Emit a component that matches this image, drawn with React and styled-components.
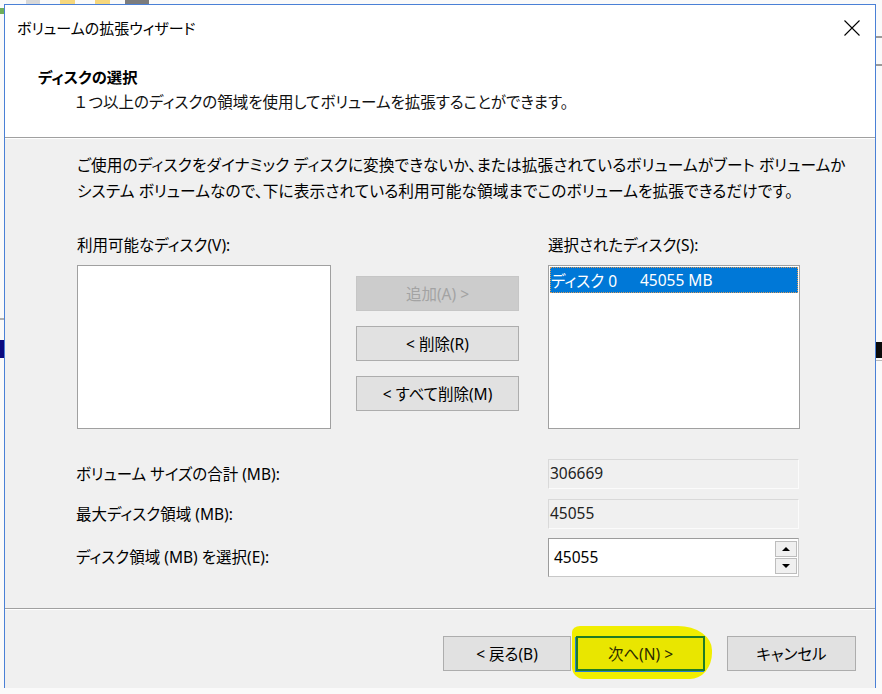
import React from 'react'
import styled, { createGlobalStyle } from 'styled-components'

const GlobalStyle = createGlobalStyle`
  html, body {
    margin: 0;
    padding: 0;
  }
  body {
    background: #fafafa;
    font-family: "Noto Sans", "Noto Sans CJK JP", sans-serif;
    font-feature-settings: "palt";
    color: #000;
  }
  * {
    box-sizing: border-box;
  }
`

const Desktop = styled.div`
  position: relative;
  width: 882px;
  height: 694px;
  overflow: hidden;
  background: #fafafa;
`

// scraps of the Disk Management window lying behind the wizard
const Scrap = styled.div`
  position: absolute;
  left: ${(p) => p.$x}px;
  top: ${(p) => p.$y}px;
  width: ${(p) => p.$w}px;
  height: ${(p) => p.$h}px;
  background: ${(p) => p.$color};
`

const Dialog = styled.div`
  position: absolute;
  left: 4px;
  top: 4px;
  width: 872px;
  height: 684px;
  border: 1px solid #4a80d6;
  border-bottom: none;
  display: flex;
  flex-direction: column;
  background: #f0f0f0;
`

const TitleBar = styled.div`
  height: 46px;
  display: flex;
  align-items: center;
  justify-content: space-between;
  padding-left: 12px;
  background: #fff;
`

const Title = styled.span`
  font-size: 15px;
  line-height: 20px;
`

const CloseButton = styled.button`
  width: 46px;
  height: 46px;
  border: none;
  background: transparent;
  display: flex;
  align-items: center;
  justify-content: center;
  padding: 0;
`

const Header = styled.div`
  height: 87px;
  background: #fff;
  border-bottom: 1px solid #a0a0a0;
  padding: 16px 0 0 33px;
`

const Heading = styled.div`
  font-size: 15.3px;
  font-weight: bold;
  line-height: 20px;
`

const SubHeading = styled.div`
  font-family: "Noto Sans CJK JP", sans-serif;
  font-size: 15.5px;
  line-height: 20px;
  margin: 4px 0 0 35px;
  color: #111;
`

// full-width digit keeps its em box
const Wide = styled.span`
  font-feature-settings: normal;
`

const Body = styled.div`
  height: 470px;
  padding: 14px 0 0 72px;
  box-shadow: inset 0 1px 0 #fff;
`

const Paragraph = styled.p`
  margin: 0;
  font-size: 15.7px;
  letter-spacing: 0.1px;
  line-height: 26px;
  white-space: nowrap;
`

const Lists = styled.div`
  display: flex;
  margin-top: 31px;
`

const ListColumn = styled.div`
  width: ${(p) => p.$width}px;
  margin-left: ${(p) => p.$offset || 0}px;
`

const Label = styled.div`
  font-size: 15.5px;
  line-height: 20px;
  white-space: nowrap;
`

const ListBox = styled.div`
  margin-top: 10px;
  height: 164px;
  background: #fff;
  border: 1px solid #a0a0a0;
  padding: 1px;
`

const ListItem = styled.div`
  height: 26px;
  display: flex;
  align-items: center;
  padding-left: 1px;
  font-size: 15.5px;
  color: ${(p) => (p.$selected ? '#fff' : '#000')};
  background: ${(p) => (p.$selected ? '#0078d7' : 'transparent')};
  outline: ${(p) => (p.$selected ? '1px dotted #d89a5a' : 'none')};
  outline-offset: -1px;
`

const ItemName = styled.span`
  width: 89px;
`

const ButtonColumn = styled.div`
  width: 163px;
  margin-left: 25px;
  padding-top: 41px;
  display: flex;
  flex-direction: column;
  gap: 15px;
`

const Button = styled.button`
  width: ${(p) => p.$width || 163}px;
  height: 35px;
  padding: 0;
  font-family: inherit;
  font-feature-settings: "palt";
  font-size: 15.5px;
  color: ${(p) => (p.disabled ? '#a3a3a3' : '#000')};
  background: ${(p) => (p.disabled ? '#cccccc' : '#e1e1e1')};
  border: 1px solid ${(p) => (p.disabled ? '#c6c6c6' : '#adadad')};
`

const Fields = styled.div`
  display: grid;
  grid-template-columns: 471px 251px;
  grid-template-rows: 30px 30px 39px;
  row-gap: 10px;
  align-items: center;
  margin-top: 30px;
  & > :nth-child(n + 5) {
    margin-top: -3px;
  }
`

const FieldLabel = styled.div`
  font-size: 15.5px;
  line-height: 20px;
  margin-left: -1px;
`

const ReadOnlyField = styled.div`
  height: 30px;
  display: flex;
  align-items: center;
  padding: 0 0 3px 1px;
  font-size: 15.5px;
  color: #222;
  background: #f0f0f0;
  border: 1px solid #d9d9d9;
  border-right-color: #fbfbfb;
  border-bottom-color: #fbfbfb;
`

const SpinField = styled.div`
  height: 39px;
  display: flex;
  align-items: center;
  justify-content: space-between;
  padding: 0 1px 0 5px;
  font-size: 15.5px;
  background: #fff;
  border: 1px solid #9c9c9c;
  border-right-color: #c8c8c8;
  border-bottom-color: #c8c8c8;
`

const SpinButtons = styled.div`
  display: flex;
  flex-direction: column;
  gap: 1px;
`

const SpinButton = styled.div`
  width: 22px;
  height: 16px;
  display: flex;
  align-items: center;
  justify-content: center;
  background: #f0f0f0;
  border: 1px solid #bdbdbd;
`

const Arrow = styled.span`
  width: 0;
  height: 0;
  border-left: 4px solid transparent;
  border-right: 4px solid transparent;
  border-${(p) => (p.$up ? 'bottom' : 'top')}: 4px solid #000;
`

const Footer = styled.div`
  flex: 1;
  border-top: 1px solid #a0a0a0;
  box-shadow: inset 0 1px 0 #fff;
  display: flex;
  justify-content: flex-end;
  align-items: flex-start;
  padding: 27px 19px 0 0;
`

const MarkerWrap = styled.div`
  position: relative;
  margin: 0 22px 0 5px;
`

const Marker = styled.span`
  position: absolute;
  left: -4px;
  top: -10px;
  width: 140px;
  height: 53px;
  background: #f1ee00;
  border-radius: 8px 34px 22px 12px / 6px 24px 26px 12px;
`

const NextButton = styled(Button)`
  position: relative;
  background: #e9e600;
  border: 2px solid #1f7c24;
  color: #2b2b00;
  box-shadow: -1px 1px 0 #2a7fd4;
`

const CloseIcon = () => (
  <svg width="16" height="16" viewBox="0 0 16 16">
    <path d="M0.5 0.5 L15.5 15.5 M15.5 0.5 L0.5 15.5" stroke="#000" strokeWidth="1.1" />
  </svg>
)

const App = () => {
  return (
    <Desktop>
      <GlobalStyle />
      <Scrap $x={26} $y={0} $w={14} $h={4} $color="#d8d8d8" />
      <Scrap $x={60} $y={0} $w={15} $h={4} $color="#f6d77c" />
      <Scrap $x={95} $y={0} $w={15} $h={4} $color="#f6d77c" />
      <Scrap $x={125} $y={0} $w={24} $h={4} $color="#7c7c7c" />
      <Scrap $x={0} $y={8} $w={4} $h={6} $color="#6fae5a" />
      <Scrap $x={0} $y={340} $w={4} $h={18} $color="#0a0a80" />
      <Scrap $x={0} $y={318} $w={4} $h={2} $color="#b0b0b0" />
      <Scrap $x={876} $y={36} $w={6} $h={2} $color="#9a9a9a" />
      <Scrap $x={876} $y={64} $w={6} $h={2} $color="#9a9a9a" />
      <Scrap $x={876} $y={342} $w={6} $h={16} $color="#0b0b0b" />
      <Scrap $x={876} $y={360} $w={6} $h={1} $color="#b8b8b8" />
      <Dialog>
        <TitleBar>
          <Title>ボリュームの拡張ウィザード</Title>
          <CloseButton>
            <CloseIcon />
          </CloseButton>
        </TitleBar>
        <Header>
          <Heading>ディスクの選択</Heading>
          <SubHeading>
            <Wide>１</Wide>つ以上のディスクの領域を使用してボリュームを拡張することができます。
          </SubHeading>
        </Header>
        <Body>
          <Paragraph>
            ご使用のディスクをダイナミック ディスクに変換できないか、または拡張されているボリュームがブート ボリュームか
            <br />
            システム ボリュームなので、下に表示されている利用可能な領域までこのボリュームを拡張できるだけです。
          </Paragraph>
          <Lists>
            <ListColumn $width={254}>
              <Label>利用可能なディスク(V):</Label>
              <ListBox />
            </ListColumn>
            <ButtonColumn>
              <Button disabled>追加(A) &gt;</Button>
              <Button>&lt; 削除(R)</Button>
              <Button>&lt; すべて削除(M)</Button>
            </ButtonColumn>
            <ListColumn $width={252} $offset={29}>
              <Label>選択されたディスク(S):</Label>
              <ListBox>
                <ListItem $selected>
                  <ItemName>ディスク 0</ItemName>
                  <span>45055 MB</span>
                </ListItem>
              </ListBox>
            </ListColumn>
          </Lists>
          <Fields>
            <FieldLabel>ボリューム サイズの合計 (MB):</FieldLabel>
            <ReadOnlyField>306669</ReadOnlyField>
            <FieldLabel>最大ディスク領域 (MB):</FieldLabel>
            <ReadOnlyField>45055</ReadOnlyField>
            <FieldLabel>ディスク領域 (MB) を選択(E):</FieldLabel>
            <SpinField>
              <span>45055</span>
              <SpinButtons>
                <SpinButton>
                  <Arrow $up />
                </SpinButton>
                <SpinButton>
                  <Arrow />
                </SpinButton>
              </SpinButtons>
            </SpinField>
          </Fields>
        </Body>
        <Footer>
          <Button $width={128}>&lt; 戻る(B)</Button>
          <MarkerWrap>
            <Marker />
            <NextButton $width={129}>次へ(N) &gt;</NextButton>
          </MarkerWrap>
          <Button $width={129}>キャンセル</Button>
        </Footer>
      </Dialog>
    </Desktop>
  )
}

export default App
